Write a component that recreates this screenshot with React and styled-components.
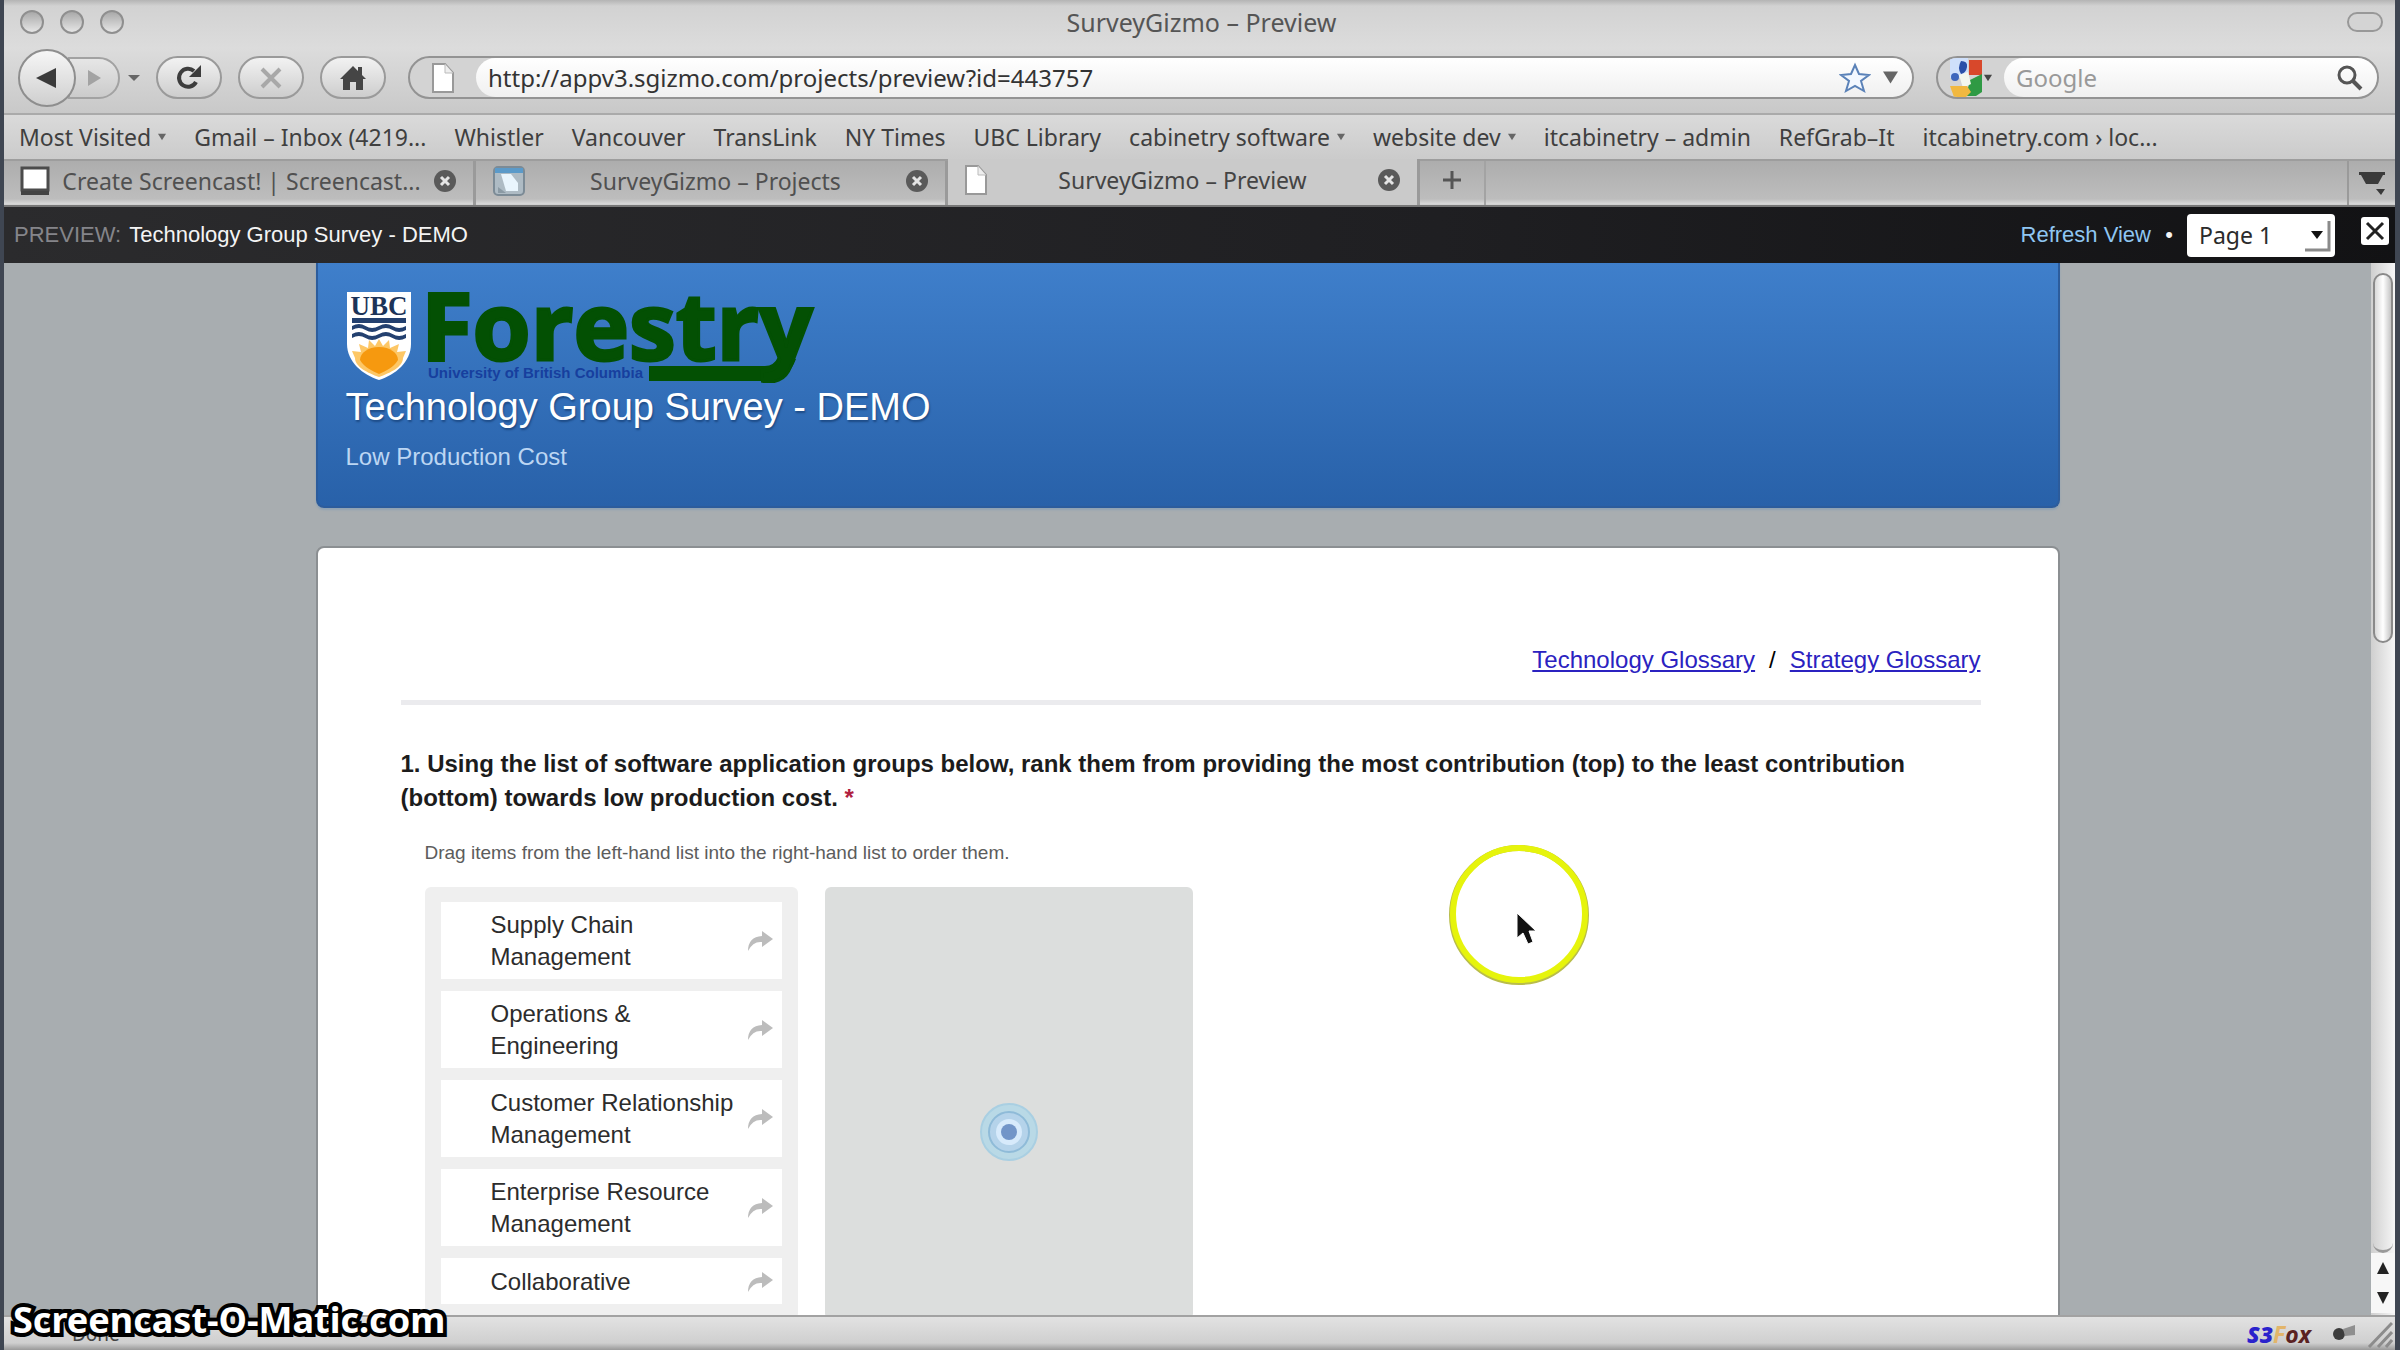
import { useState } from "react";
import styled, { createGlobalStyle } from "styled-components";

const chromeFont = `"Noto Sans", "Open Sans", sans-serif`;
const pageFont = `"Liberation Sans", Arial, sans-serif`;

const GlobalStyle = createGlobalStyle`
    * {
        box-sizing: border-box;
    }
    body {
        margin: 0;
        background-color: #3f4652;
        font-family: ${pageFont};
    }
    button, input, select {
        font: inherit;
        color: inherit;
        margin: 0;
        padding: 0;
        border: none;
        background: none;
    }
`;

const Window = styled.div`
    height: 100vh;
    display: flex;
    flex-direction: column;
    position: relative;
    overflow: hidden;
    padding: 0 5px 0 4px;
`;

/* ---------- browser chrome ---------- */

const Chrome = styled.header`
    font-family: ${chromeFont};
    color: #3c3c3c;
    background: linear-gradient(#b4b4b4 0, #d2d2d2 6px, #dcdcdc 48px, #c8c8c8 115px);
`;

const TitleBar = styled.div`
    height: 46px;
    display: grid;
    grid-template-columns: 1fr auto 1fr;
    align-items: center;
    padding: 0 12px 2px 16px;
`;

const Lights = styled.div`
    display: flex;
    gap: 16px;
`;

const Light = styled.button`
    width: 24px;
    height: 24px;
    border-radius: 50%;
    border: 2px solid #8f8f8f;
    background: linear-gradient(#a9a9a9, #e6e6e6);
`;

const WindowTitle = styled.h1`
    margin: 0;
    font-size: 25px;
    line-height: 32px;
    font-weight: 400;
    color: #555;
`;

const Pill = styled.button`
    justify-self: end;
    width: 36px;
    height: 20px;
    border: 2px solid #989898;
    border-radius: 10px;
    background-color: #d4d4d4;
`;

const NavBar = styled.div`
    height: 69px;
    display: flex;
    align-items: center;
    gap: 16px;
    padding: 0 16px 4px 14px;
    border-bottom: 2px solid #aaa;
`;

const BackForward = styled.div`
    display: flex;
    align-items: center;
`;

const BackButton = styled.button`
    width: 58px;
    height: 58px;
    display: flex;
    align-items: center;
    justify-content: center;
    border-radius: 50%;
    border: 2px solid #8e8e8e;
    background: linear-gradient(#f6f6f6, #cfcfcf);
    z-index: 1;
`;

const ForwardButton = styled.button`
    width: 52px;
    height: 42px;
    margin-left: -8px;
    display: flex;
    align-items: center;
    justify-content: center;
    border-radius: 0 21px 21px 0;
    border: 2px solid #a2a2a2;
    background: linear-gradient(#e6e6e6, #cbcbcb);
`;

const HistoryButton = styled.button`
    width: 20px;
    height: 42px;
    display: flex;
    align-items: center;
    justify-content: flex-end;
`;

const RoundButton = styled.button`
    width: 66px;
    height: 43px;
    display: flex;
    align-items: center;
    justify-content: center;
    border-radius: 22px;
    border: 2px solid #9a9a9a;
    background: linear-gradient(#f2f2f2, #cdcdcd);
`;

const Field = styled.div`
    flex: ${(props) => props.$grow};
    width: ${(props) => props.$width || "auto"};
    height: 43px;
    margin-left: 6px;
    display: flex;
    align-items: center;
    overflow: hidden;
    border: 2px solid #939393;
    border-radius: 22px;
    background-color: #d3d3d3;
`;

const FieldIcon = styled.div`
    width: 66px;
    display: flex;
    align-items: center;
    justify-content: center;
`;

const FieldBody = styled.div`
    flex: 1;
    height: 100%;
    min-width: 0;
    display: flex;
    align-items: center;
    gap: 12px;
    padding: 0 14px 0 12px;
    border-radius: 20px;
    background: linear-gradient(#fff, #f0f0f0);
`;

const FieldInput = styled.input`
    flex: 1;
    min-width: 0;
    font-size: 24px;
    line-height: 30px;
    color: #333;
    outline: none;
    &::placeholder {
        color: #999;
        opacity: 1;
    }
`;

const IconButton = styled.button`
    display: flex;
    align-items: center;
    justify-content: center;
`;

const Bookmarks = styled.nav`
    height: 44px;
    display: flex;
    align-items: center;
    gap: 28px;
    padding: 0 15px;
    font-size: 23px;
    line-height: 28px;
    white-space: nowrap;
    overflow: hidden;
    background: linear-gradient(#dadada, #cbcbcb);
`;

const Bookmark = styled.a`
    color: #3f3f3f;
    text-decoration: none;
`;

const Folder = styled.button`
    display: flex;
    align-items: center;
    gap: 7px;
    color: #3f3f3f;
`;

const TabStrip = styled.div`
    height: 48px;
    display: flex;
    font-size: 23px;
    background: linear-gradient(#adadad, #bdbdbd 38px, #d9d9d9 43px, #c9c9c9);
    border-top: 2px solid #9d9d9d;
    border-bottom: 2px solid #777;
`;

const Tab = styled.div`
    width: 472px;
    display: flex;
    align-items: center;
    padding: 0 16px 4px;
    border-right: 3px solid #9a9a9a;
    background-color: ${(props) => (props.$active ? "#cacaca" : "transparent")};
    margin-top: ${(props) => (props.$active ? "-2px" : "0")};
`;

const TabLabel = styled.button`
    flex: 1;
    min-width: 0;
    overflow: hidden;
    text-overflow: ellipsis;
    white-space: nowrap;
    line-height: 32px;
    color: ${(props) => (props.$active ? "#444" : "#505050")};
`;

const NewTab = styled.button`
    width: 66px;
    padding-bottom: 6px;
    display: flex;
    align-items: center;
    justify-content: center;
    border-right: 2px solid #a3a3a3;
`;

const TabMenu = styled.button`
    width: 48px;
    margin-left: auto;
    display: flex;
    align-items: center;
    justify-content: center;
    border-left: 2px solid #9a9a9a;
`;

/* ---------- preview bar ---------- */

const PreviewBar = styled.div`
    height: 56px;
    display: flex;
    align-items: center;
    padding: 0 6px 0 10px;
    font-size: 22px;
    line-height: 28px;
    color: #f4f4f4;
    background: linear-gradient(90deg, #2b2b2d, #1f1f22 60%, #121214);
`;

const PreviewTag = styled.span`
    color: #85858a;
    margin-right: 8px;
`;

const PreviewTools = styled.div`
    display: flex;
    align-items: center;
    margin-left: auto;
`;

const RefreshLink = styled.a`
    color: #8fc6f2;
    text-decoration: none;
`;

const Dot = styled.span`
    width: 36px;
    text-align: center;
`;

const SelectWrap = styled.label`
    height: 43px;
    width: 148px;
    display: grid;
    align-items: center;
    border-radius: 4px;
    background-color: #fff;
    > * {
        grid-area: 1 / 1;
    }
    > svg {
        justify-self: end;
        margin-right: 4px;
        pointer-events: none;
    }
`;

const PageSelect = styled.select`
    width: 100%;
    height: 43px;
    padding-left: 12px;
    appearance: none;
    font-family: ${chromeFont};
    font-size: 23px;
    line-height: 40px;
    color: #2b2b2b;
    outline: none;
`;

const CloseBar = styled.button`
    width: 28px;
    height: 28px;
    margin: 0 0 8px 26px;
    display: flex;
    align-items: center;
    justify-content: center;
    border-radius: 3px;
    background-color: #fff;
`;

/* ---------- survey ---------- */

const Viewport = styled.div`
    flex: 1;
    min-height: 0;
    display: flex;
`;

const Page = styled.main`
    flex: 1;
    display: flex;
    flex-direction: column;
    align-items: center;
    gap: 38px;
    overflow: hidden;
    background-color: #a8adb0;
`;

const Banner = styled.section`
    width: 74%;
    max-width: 1744px;
    height: 245px;
    flex: none;
    padding: 28px 28px;
    border: 2px solid #2c5c9c;
    border-top: none;
    border-radius: 0 0 8px 8px;
    box-shadow: 0 2px 2px #8fa3b5;
    background: linear-gradient(#3f7fcb, #2861a9);
`;

const Logo = styled.div`
    height: 92px;
    display: flex;
    gap: 14px;
`;

const SurveyTitle = styled.h2`
    margin: 2px 0 0;
    font-size: 38px;
    line-height: 44px;
    font-weight: 400;
    color: #fff;
    text-shadow: 1px 2px 2px #1d4b86;
`;

const SurveySub = styled.p`
    margin: 14px 0 0;
    font-size: 24px;
    line-height: 28px;
    color: #bcd6f3;
`;

const Sheet = styled.section`
    width: 74%;
    max-width: 1744px;
    flex: none;
    padding: 96px 77px 60px 83px;
    border: 2px solid #8b8f92;
    border-radius: 8px 8px 0 0;
    background-color: #fff;
`;

const Glossary = styled.div`
    display: flex;
    justify-content: flex-end;
    gap: 14px;
    padding-bottom: 24px;
    border-bottom: 5px solid #ebebee;
    font-size: 24px;
    line-height: 32px;
`;

const GlossaryLink = styled.a`
    color: #2b22c0;
`;

const Question = styled.h3`
    margin: 42px 0 0;
    font-size: 24px;
    line-height: 34px;
    font-weight: 700;
    color: #1c1c1c;
`;

const Required = styled.span`
    color: #b02040;
`;

const Hint = styled.p`
    margin: 24px 0 20px 24px;
    font-size: 19px;
    line-height: 28px;
    color: #5c5c5c;
`;

const Lists = styled.div`
    display: flex;
    gap: 27px;
    margin-left: 24px;
`;

const SourceList = styled.ul`
    width: 373px;
    margin: 0;
    padding: 15px 16px;
    display: flex;
    flex-direction: column;
    gap: 12px;
    list-style: none;
    border-radius: 6px;
    background-color: #efefef;
`;

const Item = styled.li`
    min-height: 46px;
    display: flex;
    align-items: center;
    justify-content: space-between;
    padding: 7px 8px 6px 50px;
    font-size: 24px;
    line-height: 32px;
    color: #2c2c2c;
    background-color: #fff;
`;

const ItemText = styled.span`
    width: 256px;
    margin-right: -12px;
    white-space: pre-line;
`;

const DropZone = styled.div`
    width: 368px;
    padding-top: 215px;
    display: flex;
    justify-content: center;
    align-items: flex-start;
    border-radius: 6px;
    background-color: #dcdedd;
`;

/* ---------- scroll and status bars ---------- */

const ScrollBar = styled.div`
    width: 24px;
    display: flex;
    flex-direction: column;
    align-items: center;
    padding: 10px 0 2px;
    background: linear-gradient(90deg, #cfcfcf, #f6f6f6);
`;

const Thumb = styled.div`
    width: 20px;
    height: 370px;
    border: 2px solid #8a8a8a;
    border-radius: 10px;
    background: linear-gradient(90deg, #d9d9d9, #fff 50%, #c4c4c4);
`;

const TrackEnd = styled.div`
    flex: 1;
    width: 20px;
    border-bottom: 3px solid #999;
    border-radius: 0 0 10px 10px;
`;

const ScrollStep = styled.button`
    width: 24px;
    height: 30px;
    display: flex;
    align-items: center;
    justify-content: center;
    background-color: #f7f7f7;
`;

const StatusBar = styled.footer`
    height: 35px;
    display: flex;
    align-items: center;
    padding: 0 2px 0 68px;
    border-top: 2px solid #a2a2a2;
    font-family: ${chromeFont};
    font-size: 19px;
    line-height: 28px;
    color: #444;
    background: linear-gradient(#e2e2e2, #cfcfcf 26px, #999);
`;

const Extension = styled.span`
    margin-left: auto;
    margin-right: 20px;
    font-weight: 700;
    font-style: italic;
    font-size: 23px;
    span {
        color: #5b2222;
    }
    i {
        color: #e2b56a;
    }
    b {
        color: #2a22cc;
    }
`;

const Grip = styled.svg`
    margin-left: 10px;
`;

const Watermark = styled.div`
    position: absolute;
    left: 13px;
    bottom: 10px;
    font-family: ${chromeFont};
    font-size: 36px;
    line-height: 40px;
    font-weight: 700;
    color: #fff;
    -webkit-text-stroke: 8px #000;
    paint-order: stroke fill;
`;

const Pointer = styled.svg`
    position: absolute;
    left: 1446px;
    top: 840px;
`;

const bookmarks = [
    { label: "Most Visited", folder: true },
    { label: "Gmail – Inbox (4219..." },
    { label: "Whistler" },
    { label: "Vancouver" },
    { label: "TransLink" },
    { label: "NY Times" },
    { label: "UBC Library" },
    { label: "cabinetry software", folder: true },
    { label: "website dev", folder: true },
    { label: "itcabinetry – admin" },
    { label: "RefGrab–It" },
    { label: "itcabinetry.com › loc..." },
];

const tabs = [
    { label: "Create Screencast! | Screencast...", icon: "screen" },
    { label: "SurveyGizmo – Projects", icon: "gizmo" },
    { label: "SurveyGizmo – Preview", icon: "page" },
];

const items = [
    "Supply Chain\nManagement",
    "Operations &\nEngineering",
    "Customer Relationship\nManagement",
    "Enterprise Resource\nManagement",
    "Collaborative",
];

const Caret = ({ size = 8, color = "#666" }) => (
    <svg width={size} height={size} viewBox="0 0 10 10">
        <path d="M0 1h10L5 9z" fill={color} />
    </svg>
);

const PageIcon = () => (
    <svg width="24" height="32" viewBox="0 0 24 32">
        <path d="M2 2h12l8 9v19H2z" fill="#fff" stroke="#999" strokeWidth="2" />
        <path d="M14 2v9h8" fill="#eee" stroke="#bbb" />
    </svg>
);

const TabIcon = ({ icon }) => {
    if (icon === "page") return <PageIcon />;
    if (icon === "gizmo") {
        return (
            <svg width="34" height="32" viewBox="0 0 34 32">
                <rect x="2" y="2" width="30" height="28" rx="4" fill="#aebbc4" stroke="#7c8b96" strokeWidth="2" />
                <path d="M3 3h28v5H3z" fill="#5b9ac9" />
                <path d="M9 9h10l7 9v8H14z" fill="#e9f5fd" />
                <path d="M6 22l8 6H6z" fill="#8b9aa4" />
            </svg>
        );
    }
    return (
        <svg width="30" height="30" viewBox="0 0 30 30">
            <rect x="2" y="2" width="26" height="22" fill="#fff" stroke="#4b4b4b" strokeWidth="3" />
            <path d="M1 25h28v4H1z" fill="#444" />
        </svg>
    );
};

const CloseIcon = () => (
    <svg width="24" height="24" viewBox="0 0 24 24">
        <circle cx="12" cy="12" r="11" fill="#5a5a5a" />
        <path d="M8 8l8 8M16 8l-8 8" stroke="#e4e4e4" strokeWidth="3" />
    </svg>
);

const GoogleIcon = () => (
    <svg width="34" height="40" viewBox="0 0 34 40">
        <path d="M0 0h18v20H0z" fill="#cfe0fb" />
        <path d="M11 3q7 0 6 6t-6 7q-4-6 0-13z" fill="#2b50a8" />
        <circle cx="5" cy="19" r="4" fill="#3d66bd" />
        <path d="M19 2h13v15H19z" fill="#d8482b" />
        <path d="M32 16v18l-6 4H16l4-16z" fill="#2f9a44" />
        <path d="M9 17l9-3 3 12-8 4z" fill="#f3f7ee" />
        <path d="M0 28h17l4 6-5 5H4z" fill="#f1b840" />
    </svg>
);

const Shield = () => (
    <svg width="66" height="90" viewBox="0 0 66 90">
        <path d="M1 1h64v52c0 18-16 31-32 36C17 84 1 71 1 53z" fill="#fff" />
        <text x="33" y="24" textAnchor="middle" fontFamily="Liberation Serif, serif" fontSize="27" fontWeight="700" fill="#1c3358">
            UBC
        </text>
        <path d="M6 27h54v5H6z" fill="#23406f" />
        <path d="M6 35q7-4 13.500 0t13.500 0 13.500 0T60 35v4q-7 4-13.500 0t-13.500 0-13.500 0T6 39z" fill="#23406f" />
        <path d="M6 43q7-4 13.500 0t13.500 0 13.500 0T60 43v4q-7 4-13.500 0t-13.500 0-13.500 0T6 47z" fill="#23406f" />
        <path
            d="M33 48l4 7 6-6 1 8 9-4-2 8 9-1-3 7c0 9-13 15-24 19C22 82 9 76 9 67l-3-7 9 1-2-8 9 4 1-8 6 6z"
            fill="#fdc766"
        />
        <path d="M33 56c11 0 19 6 19 13-4 7-12 11-19 14-7-3-15-7-19-14 0-7 8-13 19-13z" fill="#f6990f" />
    </svg>
);

const ForestryMark = () => (
    <svg width="410" height="92" viewBox="0 0 410 92">
        <path d="M223 75h116q9 0 13-9l18 2q-8 22-30 22H223z" fill="#035003" />
        <text
            x="-5"
            y="69"
            fontFamily="Open Sans, sans-serif"
            fontSize="94"
            fontWeight="700"
            fill="#035003"
            stroke="#035003"
            strokeWidth="3"
        >
            Forestry
        </text>
        <text x="2" y="87" fontFamily="Liberation Sans, sans-serif" fontSize="15" fontWeight="700" fill="#173f9e">
            University of British Columbia
        </text>
    </svg>
);

const ArrowIcon = () => (
    <svg width="28" height="24" viewBox="0 0 28 24">
        <path d="M16 2l11 8-11 8v-5Q7 12 2 22 2 8 16 7z" fill="#bcbcbc" />
    </svg>
);

const App = () => {
    const [url, setUrl] = useState("http://appv3.sgizmo.com/projects/preview?id=443757");
    const [active, setActive] = useState(2);

    return (
        <Window>
            <GlobalStyle />
            <Chrome>
                <TitleBar>
                    <Lights>
                        <Light aria-label="Close" />
                        <Light aria-label="Minimize" />
                        <Light aria-label="Zoom" />
                    </Lights>
                    <WindowTitle>SurveyGizmo – Preview</WindowTitle>
                    <Pill aria-label="Toggle toolbar" />
                </TitleBar>
                <NavBar>
                    <BackForward>
                        <BackButton aria-label="Back">
                            <svg width="24" height="24" viewBox="0 0 24 24">
                                <path d="M21 2v20L1 12z" fill="#3a3a3a" />
                            </svg>
                        </BackButton>
                        <ForwardButton aria-label="Forward">
                            <svg width="18" height="18" viewBox="0 0 18 18">
                                <path d="M3 1v16l13-8z" fill="#a3a3a3" />
                            </svg>
                        </ForwardButton>
                        <HistoryButton aria-label="History">
                            <svg width="12" height="6" viewBox="0 0 12 6">
                                <path d="M0 0h12L6 6z" fill="#666" />
                            </svg>
                        </HistoryButton>
                    </BackForward>
                    <RoundButton aria-label="Reload">
                        <svg width="30" height="30" viewBox="0 0 30 30">
                            <path d="M22 19a9 9 0 1 1-2-11" fill="none" stroke="#3d3d3d" strokeWidth="4" />
                            <path d="M27 2v12H15z" fill="#3d3d3d" />
                        </svg>
                    </RoundButton>
                    <RoundButton aria-label="Stop">
                        <svg width="24" height="24" viewBox="0 0 24 24">
                            <path d="M3 3l18 18M21 3L3 21" stroke="#a8a8a8" strokeWidth="4" />
                        </svg>
                    </RoundButton>
                    <RoundButton aria-label="Home">
                        <svg width="28" height="26" viewBox="0 0 28 26">
                            <path d="M14 1l5 5V2h4v8l4 4h-3v11h-7v-8h-6v8H4V14H1z" fill="#454545" />
                        </svg>
                    </RoundButton>
                    <Field $grow="1">
                        <FieldIcon>
                            <PageIcon />
                        </FieldIcon>
                        <FieldBody>
                            <FieldInput aria-label="Address" value={url} onChange={(e) => setUrl(e.target.value)} />
                            <IconButton aria-label="Bookmark this page">
                                <svg width="32" height="32" viewBox="0 0 32 32">
                                    <path
                                        d="M16 3l4 9 10 1-8 6 3 10-9-5-9 5 3-10-8-6 10-1z"
                                        fill="#f3f8ff"
                                        stroke="#5b82b8"
                                        strokeWidth="2"
                                    />
                                </svg>
                            </IconButton>
                            <IconButton aria-label="Show history">
                                <Caret size={15} />
                            </IconButton>
                        </FieldBody>
                    </Field>
                    <Field $grow="none" $width="443px">
                        <FieldIcon>
                            <GoogleIcon />
                            <Caret size={8} color="#444" />
                        </FieldIcon>
                        <FieldBody>
                            <FieldInput aria-label="Search" placeholder="Google" />
                            <IconButton aria-label="Search">
                                <svg width="26" height="26" viewBox="0 0 26 26">
                                    <circle cx="10" cy="10" r="8" fill="none" stroke="#555" strokeWidth="3" />
                                    <path d="M16 16l8 8" stroke="#555" strokeWidth="4" />
                                </svg>
                            </IconButton>
                        </FieldBody>
                    </Field>
                </NavBar>
                <Bookmarks>
                    {bookmarks.map((item) =>
                        item.folder ? (
                            <Folder key={item.label}>
                                {item.label}
                                <Caret />
                            </Folder>
                        ) : (
                            <Bookmark href="#" key={item.label}>
                                {item.label}
                            </Bookmark>
                        )
                    )}
                </Bookmarks>
                <TabStrip>
                    {tabs.map((tab, i) => (
                        <Tab $active={i === active} key={tab.label}>
                            <TabIcon icon={tab.icon} />
                            <TabLabel $active={i === active} onClick={() => setActive(i)}>
                                {tab.label}
                            </TabLabel>
                            <IconButton aria-label="Close tab">
                                <CloseIcon />
                            </IconButton>
                        </Tab>
                    ))}
                    <NewTab aria-label="New tab">
                        <svg width="20" height="20" viewBox="0 0 20 20">
                            <path d="M10 1v18M1 10h18" stroke="#555" strokeWidth="3" />
                        </svg>
                    </NewTab>
                    <TabMenu aria-label="List all tabs">
                        <svg width="28" height="26" viewBox="0 0 28 26">
                            <path d="M1 2h26v3h-2l-5 9H8L3 5H1z" fill="#3a3a3a" />
                            <path d="M18 19h9l-4 6z" fill="#3a3a3a" />
                        </svg>
                    </TabMenu>
                </TabStrip>
            </Chrome>

            <PreviewBar>
                <PreviewTag>PREVIEW:</PreviewTag>
                <span>Technology Group Survey - DEMO</span>
                <PreviewTools>
                    <RefreshLink href="#">Refresh View</RefreshLink>
                    <Dot>•</Dot>
                    <SelectWrap>
                        <PageSelect aria-label="Page" defaultValue="1">
                            <option value="1">Page 1</option>
                            <option value="2">Page 2</option>
                        </PageSelect>
                        <svg width="28" height="34" viewBox="0 0 28 34">
                            <path d="M26 3v29H2" fill="none" stroke="#8a8a8a" strokeWidth="3" />
                            <path d="M8 13h12l-6 8z" fill="#111" />
                        </svg>
                    </SelectWrap>
                    <CloseBar aria-label="Close preview">
                        <svg width="20" height="20" viewBox="0 0 20 20">
                            <path d="M2 2l16 16M18 2L2 18" stroke="#222" strokeWidth="3" />
                        </svg>
                    </CloseBar>
                </PreviewTools>
            </PreviewBar>

            <Viewport>
                <Page>
                    <Banner>
                        <Logo>
                            <Shield />
                            <ForestryMark />
                        </Logo>
                        <SurveyTitle>Technology Group Survey - DEMO</SurveyTitle>
                        <SurveySub>Low Production Cost</SurveySub>
                    </Banner>
                    <Sheet>
                        <Glossary>
                            <GlossaryLink href="#">Technology Glossary</GlossaryLink>
                            <span>/</span>
                            <GlossaryLink href="#">Strategy Glossary</GlossaryLink>
                        </Glossary>
                        <Question>
                            1. Using the list of software application groups below, rank them from providing the most
                            contribution (top) to the least contribution (bottom) towards low production cost.{" "}
                            <Required>*</Required>
                        </Question>
                        <Hint>Drag items from the left-hand list into the right-hand list to order them.</Hint>
                        <Lists>
                            <SourceList>
                                {items.map((item) => (
                                    <Item key={item}>
                                        <ItemText>{item}</ItemText>
                                        <ArrowIcon />
                                    </Item>
                                ))}
                            </SourceList>
                            <DropZone>
                                <svg width="60" height="60" viewBox="0 0 60 60">
                                    <circle cx="30" cy="30" r="28" fill="#b9d9e6" stroke="#a9cfe2" strokeWidth="2" />
                                    <circle cx="30" cy="30" r="20" fill="#b5d3ea" stroke="#8fbbd8" strokeWidth="2" />
                                    <circle cx="30" cy="30" r="13" fill="#d7eafb" />
                                    <circle cx="30" cy="30" r="8" fill="#7295c8" />
                                </svg>
                            </DropZone>
                        </Lists>
                    </Sheet>
                </Page>
                <ScrollBar>
                    <Thumb />
                    <TrackEnd />
                    <ScrollStep aria-label="Scroll up">
                        <svg width="12" height="12" viewBox="0 0 12 12">
                            <path d="M6 0l6 12H0z" fill="#222" />
                        </svg>
                    </ScrollStep>
                    <ScrollStep aria-label="Scroll down">
                        <svg width="12" height="12" viewBox="0 0 12 12">
                            <path d="M0 0h12L6 12z" fill="#222" />
                        </svg>
                    </ScrollStep>
                </ScrollBar>
            </Viewport>

            <StatusBar>
                <span>Done</span>
                <Extension>
                    <b>S3</b>
                    <i>F</i>
                    <span>ox</span>
                </Extension>
                <svg width="26" height="20" viewBox="0 0 26 20">
                    <circle cx="8" cy="10" r="6" fill="#3d3d3d" />
                    <path d="M12 5l12-4v10l-10 1z" fill="#8f8f8f" />
                </svg>
                <Grip width="26" height="28" viewBox="0 0 26 28">
                    <path d="M25 3L2 27M25 12L11 27M25 20l-6 7" stroke="#8c8c8c" strokeWidth="3" />
                </Grip>
            </StatusBar>

            <Watermark>Screencast-O-Matic.com</Watermark>
            <Pointer width="146" height="148" viewBox="0 0 146 148">
                <circle cx="73" cy="75" r="67" fill="none" stroke="#b9bd4a" strokeWidth="6" />
                <circle cx="73" cy="74" r="66" fill="none" stroke="#e6f40c" strokeWidth="6" />
                <path d="M71 73v25l6-5 5 11 5-2-4-11h7z" fill="#111" stroke="#fff" strokeWidth="1" />
            </Pointer>
        </Window>
    );
};

export default App;
